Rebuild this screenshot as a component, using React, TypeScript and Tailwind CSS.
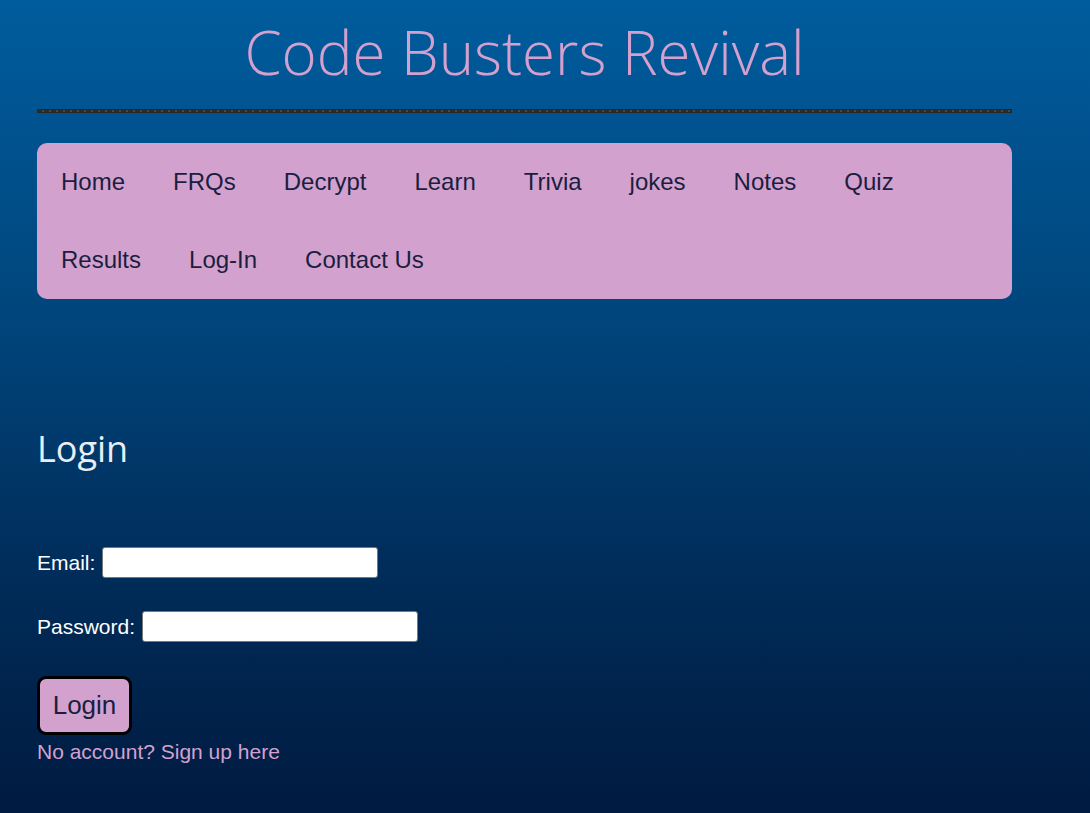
const navItems = ['Home', 'FRQs', 'Decrypt', 'Learn', 'Trivia', 'jokes', 'Notes', 'Quiz', 'Results', 'Log-In', 'Contact Us'];

export default function App() {
  return (
    <div className="min-h-screen bg-[linear-gradient(180deg,#005c9d_0%,#00467d_38%,#002d5a_70%,#001a40_100%)] font-['Liberation_Sans',Arial,sans-serif]">
      <div className="ml-[37px] w-[975px]">
        <header className="pt-[15px]">
          <h1 className="text-center text-[60px] leading-[74px] font-light text-[#d4a1cf] font-['Open_Sans',sans-serif]">
            Code Busters Revival
          </h1>
          <div className="mt-[20px] h-[4px] bg-[repeating-linear-gradient(90deg,#2b2b2b_0px,#2b2b2b_5px,#474747_5px,#474747_7px)] border-y border-[#262626]" />
        </header>

        <nav className="mt-[30px] flex flex-wrap rounded-[10px] bg-[#d3a1ce]">
          {navItems.map((item) => (
            <a key={item} href="#" className="px-6 py-[25px] text-[24px] leading-[28px] text-[#1b1e3e]">
              {item}
            </a>
          ))}
        </nav>

        <main>
          <h2 className="mt-[128px] text-[36px] leading-[44px] text-[#e9eef4] font-['Open_Sans',sans-serif]">Login</h2>

          <form className="mt-[76px]" onSubmit={(e) => e.preventDefault()}>
            <div className="flex h-[31px] items-center gap-[7px]">
              <label className="text-[21px] text-white">Email:</label>
              <input type="email" className="h-[31px] w-[276px] rounded-[3px] border border-[#777] bg-white" />
            </div>
            <div className="mt-[33px] flex h-[31px] items-center gap-[7px]">
              <label className="text-[21px] text-white">Password:</label>
              <input type="password" className="h-[31px] w-[276px] rounded-[3px] border border-[#777] bg-white" />
            </div>
            <button type="submit" className="mt-[34px] flex h-[59px] w-[95px] items-center justify-center rounded-[9px] border-[3px] border-black bg-[#d3a1ce] text-[26px] text-[#1b1e3e]">
              Login
            </button>
          </form>

          <a href="#" className="mt-[5px] block text-[21px] leading-[24px] text-[#d3a1ce]">
            No account? Sign up here
          </a>
        </main>
      </div>
    </div>
  );
}
